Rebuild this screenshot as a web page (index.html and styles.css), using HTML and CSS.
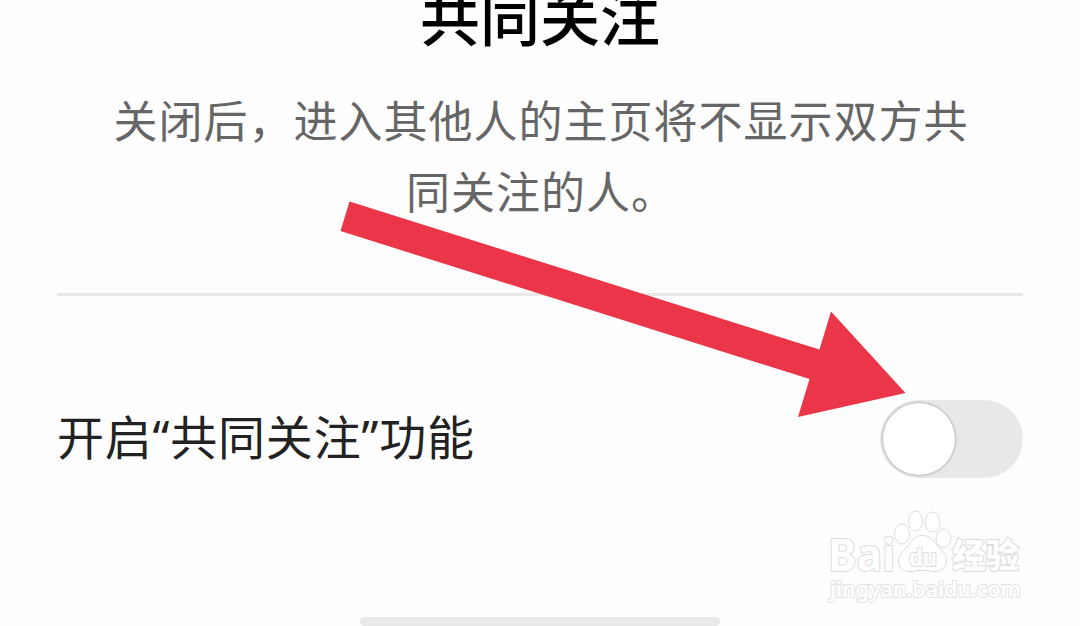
FILE: index.html
```
<!DOCTYPE html>
<html lang="zh-CN">
<head>
    <meta charset="UTF-8">
    <meta name="viewport" content="width=device-width, initial-scale=1.0">
    <title>共同关注</title>
    <link rel="stylesheet" href="styles.css">
</head>
<body>
    <main class="page">
        <header class="intro">
            <h1>共同关注</h1>
            <p>关闭后，进入其他人的主页将不显示双方共<br>同关注的人。</p>
        </header>

        <div class="setting">
            <span class="label">开启“共同关注”功能</span>
            <button class="switch" role="switch" aria-checked="false" aria-label="共同关注"><span class="knob"></span></button>
        </div>

        <footer class="bottom">
            <div class="home-bar"></div>
        </footer>
    </main>

    <svg class="arrow" width="1080" height="626" viewBox="0 0 1080 626">
        <path d="M349.500 201.500 L819.500 349.500 L831 311.500 L905.500 393 L798 417 L809.500 379 L340.500 231 Z"/>
    </svg>

    <svg class="watermark" width="220" height="110" viewBox="820 500 220 110">
        <g class="logo">
            <text class="latin" x="828" y="571" textLength="67" lengthAdjust="spacingAndGlyphs">Bai</text>
            <ellipse cx="902" cy="534" rx="7.500" ry="10"/>
            <ellipse cx="915.500" cy="521" rx="7" ry="10"/>
            <ellipse cx="932.500" cy="522" rx="7.500" ry="10"/>
            <ellipse cx="943.500" cy="538.500" rx="7.500" ry="9.500"/>
            <path d="M922 535.500 C914 535.500 911 542 907 547 C902 552 898 556 898.500 562 C899 569 905 572 911 571.500 C918 570 926 570 933 571.500 C941 572.500 947 567 946.500 560 C946 553 941 550 937 545 C933 539 929 535.500 922 535.500 Z"/>
            <text class="du" x="909" y="566" textLength="28" lengthAdjust="spacingAndGlyphs">du</text>
            <text class="hanzi" x="952" y="568" textLength="67" lengthAdjust="spacingAndGlyphs">经验</text>
        </g>
        <text class="site" x="830" y="597" textLength="191" lengthAdjust="spacingAndGlyphs">jingyan.baidu.com</text>
    </svg>
</body>
</html>
```

FILE: styles.css
```
* {
    box-sizing: border-box;
}

body {
    margin: 0;
    height: 100vh;
    overflow: hidden;
    position: relative;
    background-color: #fefefe;
    font-family: "Noto Sans CJK SC", sans-serif;
}

.page {
    height: 626px;
    padding: 0 57px;
    display: flex;
    flex-direction: column;
}

.intro {
    height: 296px;
    border-bottom: 3px solid #e8e8e8;
    text-align: center;
}

h1 {
    margin: -23px 0 0;
    font-size: 60px;
    font-weight: 500;
    line-height: 76px;
    color: #000;
}

.intro p {
    margin: 31px -20px 0 -18px;
    font-size: 44px;
    font-weight: 400;
    letter-spacing: 1px;
    line-height: 71px;
    color: #666;
}

.setting {
    height: 285px;
    display: flex;
    align-items: center;
    justify-content: space-between;
}

.label {
    padding-bottom: 4px;
    font-family: "Noto Sans", "Noto Sans CJK SC", sans-serif;
    font-size: 47px;
    letter-spacing: 0.8px;
    line-height: 70px;
    color: #222;
}

.switch {
    width: 143px;
    height: 78px;
    padding: 3px;
    border: none;
    border-radius: 39px;
    background-color: #e8e8e8;
}

.knob {
    display: block;
    width: 72px;
    height: 72px;
    border-radius: 50%;
    background-color: #fff;
    box-shadow: 0 0 3px rgba(0, 0, 0, 0.4);
}

.bottom {
    flex: 1;
    display: flex;
    justify-content: center;
    align-items: flex-end;
}

.home-bar {
    width: 360px;
    height: 9px;
    border-radius: 5px;
    background-color: #e9e9e9;
}

.arrow {
    position: absolute;
    top: 0;
    left: 0;
    fill: #ea3648;
    pointer-events: none;
}

.watermark {
    position: absolute;
    top: 500px;
    left: 820px;
    fill: #fff;
    stroke: #dcdcdc;
    stroke-width: 1px;
    pointer-events: none;
}

.latin {
    font: bold 44px "Noto Sans", sans-serif;
}

.du {
    font: bold 24px "Noto Sans", sans-serif;
}

.hanzi {
    font: 900 34px "Noto Sans CJK SC", sans-serif;
}

.site {
    font: 600 22px "Noto Sans", sans-serif;
    stroke: #e2e2e2;
}

.watermark text {
    paint-order: stroke;
    stroke-width: 2px;
}
```
